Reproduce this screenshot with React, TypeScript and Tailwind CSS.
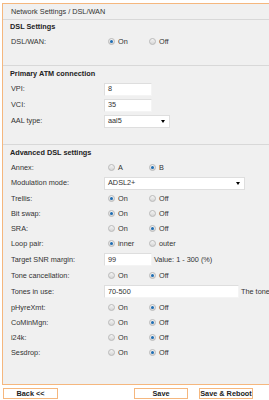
import React from "react";

function Radio({ checked }: { checked?: boolean }) {
    return (
        <span className="relative inline-block w-[7px] h-[7px] rounded-full border border-[#b9b9b9] bg-gradient-to-b from-[#f4f4f4] to-[#d6d6d6] shrink-0">
            {checked && (
                <span className="absolute left-[1px] top-[1px] w-[3px] h-[3px] rounded-full bg-[#1e6db3]" />
            )}
        </span>
    );
}

function RadioPair({ a = "On", b = "Off", first = false }: { a?: string; b?: string; first?: boolean }) {
    return (
        <div className="flex items-center">
            <div className="w-[41px] flex items-center gap-[3px] pl-[4px]">
                <Radio checked={first} />
                <span>{a}</span>
            </div>
            <div className="w-[41px] flex items-center gap-[3px] pl-[4px]">
                <Radio checked={!first} />
                <span>{b}</span>
            </div>
        </div>
    );
}

function Row({ label, tall, children }: { label: string; tall?: boolean; children: React.ReactNode }) {
    return (
        <div className={"flex items-center " + (tall ? "h-[16px]" : "h-[15px]")}>
            <div className="w-[94px] pl-[1px] shrink-0">{label}</div>
            <div className="flex items-center whitespace-nowrap">{children}</div>
        </div>
    );
}

function Field({ value, w }: { value: string; w: string }) {
    return (
        <div className={"h-[13px] bg-white border border-[#dedede] border-r-[#f4f4f4] border-b-[#f4f4f4] flex items-center pl-[3px] " + w}>
            {value}
        </div>
    );
}

function Select({ value, w }: { value: string; w: string }) {
    return (
        <div className={"h-[13px] bg-white border border-[#dedede] flex items-center justify-between pl-[3px] pr-[4px] " + w}>
            <span>{value}</span>
            <span className="w-0 h-0 border-l-[2.5px] border-r-[2.5px] border-t-[3px] border-l-transparent border-r-transparent border-t-black" />
        </div>
    );
}

function Button({ label, cls }: { label: string; cls: string }) {
    return (
        <div className={"h-[11px] border border-[#f5b77e] bg-white flex items-center justify-center font-bold text-[#222] " + cls}>
            {label}
        </div>
    );
}

export default function App() {
    return (
        <div className="w-[269px] h-[400px] overflow-hidden bg-white text-[#333] text-[7.3px] leading-none font-['Liberation_Sans',Arial,sans-serif]">
            <div className="ml-[2px] mt-[3px] w-[300px] border border-[#f5b77e] bg-[#f0f0f0]">
                <div className="h-[16px] flex items-center pl-[8px] border-b border-[#d8d8d8]">
                    Network Settings / DSL/WAN
                </div>

                <div className="pl-[7px] pb-[16px] border-b border-[#d8d8d8]">
                    <div className="h-[14px] flex items-center font-bold text-[#222]">DSL Settings</div>
                    <Row label="DSL/WAN:">
                        <RadioPair first />
                    </Row>
                </div>

                <div className="pl-[7px] pt-[1px] pb-[15px] border-b border-[#d8d8d8]">
                    <div className="h-[14px] flex items-center font-bold text-[#222]">Primary ATM connection</div>
                    <Row label="VPI:" tall>
                        <Field value="8" w="w-[48px]" />
                    </Row>
                    <Row label="VCI:" tall>
                        <Field value="35" w="w-[48px]" />
                    </Row>
                    <Row label="AAL type:" tall>
                        <Select value="aal5" w="w-[66px]" />
                    </Row>
                </div>

                <div className="pl-[7px] pt-[1px] pb-[24px]">
                    <div className="h-[14px] flex items-center font-bold text-[#222]">Advanced DSL settings</div>
                    <Row label="Annex:">
                        <RadioPair a="A" b="B" />
                    </Row>
                    <Row label="Modulation mode:" tall>
                        <Select value="ADSL2+" w="w-[141px]" />
                    </Row>
                    <Row label="Trellis:">
                        <RadioPair first />
                    </Row>
                    <Row label="Bit swap:">
                        <RadioPair first />
                    </Row>
                    <Row label="SRA:">
                        <RadioPair />
                    </Row>
                    <Row label="Loop pair:">
                        <RadioPair a="inner" b="outer" first />
                    </Row>
                    <div className="flex items-center h-[17px]">
                        <div className="w-[94px] pl-[1px] shrink-0">Target SNR margin:</div>
                        <Field value="99" w="w-[48px]" />
                        <span className="ml-[2px] whitespace-nowrap">Value: 1 - 300 (%)</span>
                    </div>
                    <Row label="Tone cancellation:">
                        <RadioPair />
                    </Row>
                    <div className="flex items-center h-[17px]">
                        <div className="w-[94px] pl-[1px] shrink-0">Tones in use:</div>
                        <Field value="70-500" w="w-[135px]" />
                        <span className="ml-[2px] whitespace-nowrap">The tones</span>
                    </div>
                    <Row label="pHyreXmt:">
                        <RadioPair />
                    </Row>
                    <Row label="CoMinMgn:">
                        <RadioPair />
                    </Row>
                    <Row label="i24k:">
                        <RadioPair />
                    </Row>
                    <Row label="Sesdrop:">
                        <RadioPair />
                    </Row>
                </div>
            </div>

            <div className="flex mt-[3px]">
                <Button label="Back <<" cls="ml-[3px] w-[55px]" />
                <Button label="Save" cls="ml-[76px] w-[54px]" />
                <Button label="Save & Reboot" cls="ml-[11px] w-[54px]" />
            </div>
        </div>
    );
}
